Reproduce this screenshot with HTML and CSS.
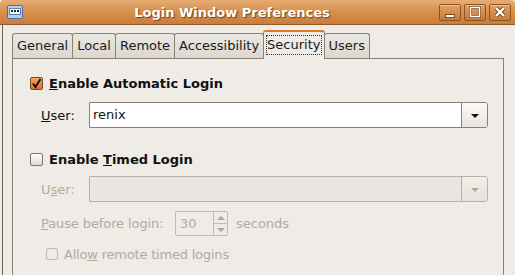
FILE: index.html
```html
<!DOCTYPE html>
<html lang="en">

<head>
    <meta charset="UTF-8">
    <title>Login Window Preferences</title>
    <link rel="stylesheet" href="styles.css">
</head>

<body>
    <div class="window">
        <div class="titlebar">
            <div class="app-icon">
                <svg width="16" height="14" viewBox="0 0 16 14">
                    <rect x="0.5" y="0.5" width="15" height="13" rx="1.5" fill="#b7cdea" stroke="#4a6fa8"/>
                    <rect x="2.5" y="3.5" width="11" height="6" fill="#fff" stroke="#5b7fb4"/>
                    <rect x="4" y="5" width="2" height="2" fill="#222"/>
                    <rect x="7" y="5" width="2" height="2" fill="#222"/>
                    <rect x="10" y="5" width="2" height="2" fill="#222"/>
                </svg>
            </div>
            <div class="title">Login Window Preferences</div>
            <div class="wm-buttons">
                <div class="wm-btn">
                    <svg width="22" height="17" viewBox="0 0 22 17">
                        <rect x="6.5" y="10.5" width="9" height="3" fill="#fff" stroke="#7a4a1c"/>
                    </svg>
                </div>
                <div class="wm-btn">
                    <svg width="22" height="17" viewBox="0 0 22 17">
                        <rect x="6.5" y="3.5" width="9" height="9" fill="none" stroke="#7a4a1c" stroke-width="3"/>
                        <rect x="6.5" y="3.5" width="9" height="9" fill="none" stroke="#fff" stroke-width="1.5"/>
                    </svg>
                </div>
                <div class="wm-btn">
                    <svg width="22" height="17" viewBox="0 0 22 17">
                        <path d="M7 4 L15 12 M15 4 L7 12" stroke="#7a4a1c" stroke-width="4"/>
                        <path d="M7 4 L15 12 M15 4 L7 12" stroke="#fff" stroke-width="2.2"/>
                    </svg>
                </div>
            </div>
        </div>

        <div class="frame">
            <div class="tabs">
                <div class="tab">General</div>
                <div class="tab">Local</div>
                <div class="tab">Remote</div>
                <div class="tab">Accessibility</div>
                <div class="tab active"><span class="focus">Security</span></div>
                <div class="tab">Users</div>
            </div>

            <div class="panel">
                <div class="check-row first">
                    <span class="checkbox checked">
                        <svg width="13" height="13" viewBox="0 0 13 13">
                            <path d="M3 6.5 L5.5 10 L10.5 2" fill="none" stroke="#111" stroke-width="2"/>
                        </svg>
                    </span>
                    <span class="check-label"><u>E</u>nable Automatic Login</span>
                </div>
                <div class="field-row user-row">
                    <span class="field-label"><u>U</u>ser:</span>
                    <div class="combo">
                        <div class="combo-entry">renix</div>
                        <div class="combo-btn"><span class="arrow"></span></div>
                    </div>
                </div>

                <div class="check-row timed">
                    <span class="checkbox"></span>
                    <span class="check-label">Enable <u>T</u>imed Login</span>
                </div>
                <div class="field-row user-row2 disabled">
                    <span class="field-label">U<u>s</u>er:</span>
                    <div class="combo">
                        <div class="combo-entry"></div>
                        <div class="combo-btn"><span class="arrow"></span></div>
                    </div>
                </div>
                <div class="field-row pause-row disabled">
                    <span class="field-label wide"><u>P</u>ause before login:</span>
                    <div class="spin">
                        <div class="spin-entry">30</div>
                        <div class="spin-btns">
                            <span class="up"></span>
                            <span class="down"></span>
                        </div>
                    </div>
                    <span class="unit">seconds</span>
                </div>
                <div class="check-row remote disabled">
                    <span class="checkbox small"></span>
                    <span class="check-label plain">Allo<u>w</u> remote timed logins</span>
                </div>
            </div>
        </div>
    </div>
</body>

</html>
```

FILE: styles.css
```css
body {
    margin: 0;
    padding: 0;
    font-family: "DejaVu Sans", sans-serif;
    font-size: 13px;
    color: #101010;
    background-color: #efebe7;
}

.window {
    width: 515px;
    height: 275px;
    overflow: hidden;
    background-color: #efebe7;
}

/* title bar */
.titlebar {
    height: 24px;
    display: flex;
    align-items: center;
    background: linear-gradient(#e6ac73, #d8924f 45%, #c97d3c);
    border-bottom: 1px solid #8e5a2a;
    border-radius: 4px 4px 0 0;
}

.app-icon {
    width: 16px;
    height: 14px;
    margin-left: 7px;
    margin-top: -1px;
}

.app-icon svg,
.wm-btn svg {
    display: block;
}

.title {
    flex: 1;
    text-align: center;
    font-weight: bold;
    font-size: 13px;
    color: #fff;
    text-shadow: 1px 1px 1px #6e4116;
    padding-left: 2px;
}

.wm-buttons {
    display: flex;
    gap: 3px;
    margin-right: 4px;
    margin-top: 1px;
}

.wm-btn {
    width: 22px;
    height: 17px;
    border: 1px solid #8a5523;
    border-radius: 2px;
    box-sizing: border-box;
    background: linear-gradient(#e2a163, #c87b38);
    box-shadow: inset 0 1px 0 rgba(255, 255, 255, 0.35);
    display: flex;
    align-items: center;
    justify-content: center;
}

.wm-btn svg {
    margin: -1px;
}

/* window body */
.frame {
    margin-left: 2px;
    border-left: 1px solid #6f6253;
    padding: 6px 11px 0 9px;
    height: 250px;
}

.tabs {
    display: flex;
    align-items: flex-end;
    height: 27px;
}

.tab {
    height: 24px;
    line-height: 23px;
    padding: 0 4px;
    border: 1px solid #8c8072;
    border-bottom: none;
    border-radius: 3px 3px 0 0;
    background: linear-gradient(#ebe7e2, #dcd7d0);
    color: #1a1a1a;
    margin-left: -1px;
}

.tab:first-child {
    margin-left: 0;
}

.tab.active {
    height: 27px;
    line-height: 26px;
    margin-bottom: -1px;
    padding: 0 2px;
    background: #efebe7;
    border-top: 2px solid #e07a24;
    position: relative;
    z-index: 1;
}

.focus {
    border: 1px dotted #333;
    padding: 1px 0 2px 0;
}

.panel {
    border: 1px solid #8c8072;
    border-bottom: none;
    height: 230px;
    padding: 15px 0 0 17px;
}

/* check rows */
.check-row {
    display: flex;
    align-items: center;
    height: 18px;
}

.check-row.timed {
    margin-top: 22px;
}

.check-row.remote {
    margin-top: 9px;
    padding-left: 16px;
}

.checkbox {
    width: 13px;
    height: 13px;
    box-sizing: border-box;
    border: 1px solid #7d7467;
    border-radius: 2px;
    background: linear-gradient(#ffffff, #dedad4);
    position: relative;
    flex-shrink: 0;
}

.checkbox.checked {
    border-color: #7a4a21;
    background: linear-gradient(#f7a35e, #e0712a);
}

.checkbox svg {
    position: absolute;
    left: -1px;
    top: -1px;
}

.checkbox.small {
    width: 12px;
    height: 12px;
    border-color: #c2b8ab;
    background: #efebe7;
}

.check-label {
    margin-left: 6px;
    font-weight: bold;
}

.check-label.plain {
    font-weight: normal;
    letter-spacing: -0.2px;
}

/* field rows */
.field-row {
    display: flex;
    align-items: center;
    padding-left: 11px;
}

.user-row {
    margin-top: 10px;
}

.user-row2 {
    margin-top: 8px;
}

.pause-row {
    margin-top: 9px;
}

.field-label {
    width: 48px;
}

.field-label.wide {
    width: 134px;
    letter-spacing: -0.1px;
}

.combo {
    display: flex;
    width: 399px;
    height: 26px;
    box-sizing: border-box;
    border: 1px solid #8a7f71;
    border-radius: 0 3px 3px 0;
    background: #fff;
}

.combo-entry {
    flex: 1;
    line-height: 24px;
    padding-left: 3px;
    border-radius: 2px 0 0 2px;
}

.combo-btn {
    width: 25px;
    border-left: 1px solid #8a7f71;
    background: linear-gradient(#fbfaf9, #e8e4df);
    border-radius: 0 2px 2px 0;
    display: flex;
    align-items: center;
    justify-content: center;
}

.arrow {
    width: 0;
    height: 0;
    border-left: 4px solid transparent;
    border-right: 4px solid transparent;
    border-top: 4px solid #111;
    margin-top: 1px;
}

.spin {
    display: flex;
    width: 53px;
    height: 25px;
    box-sizing: border-box;
    border: 1px solid #c3b9ac;
    border-radius: 2px;
}

.spin-entry {
    flex: 1;
    line-height: 23px;
    padding-left: 4px;
}

.spin-btns {
    width: 13px;
    border-left: 1px solid #c3b9ac;
    display: flex;
    flex-direction: column;
}

.spin-btns span {
    flex: 1;
    display: flex;
    align-items: center;
    justify-content: center;
}

.spin-btns .up {
    border-bottom: 1px solid #c3b9ac;
}

.spin-btns .up::before,
.spin-btns .down::before {
    content: "";
    width: 0;
    height: 0;
    border-left: 4px solid transparent;
    border-right: 4px solid transparent;
}

.spin-btns .up::before {
    border-bottom: 4px solid #b0a596;
}

.spin-btns .down::before {
    border-top: 4px solid #b0a596;
}

.unit {
    margin-left: 8px;
}

/* disabled state */
.disabled {
    color: #b5aa9c;
}

.disabled .combo {
    border-color: #bcb0a1;
    background: #e9e5e0;
}

.disabled .combo-btn {
    border-left-color: #bcb0a1;
    background: linear-gradient(#f1eeea, #e6e2dc);
}

.disabled .arrow {
    border-top-color: #b0a596;
}
```
